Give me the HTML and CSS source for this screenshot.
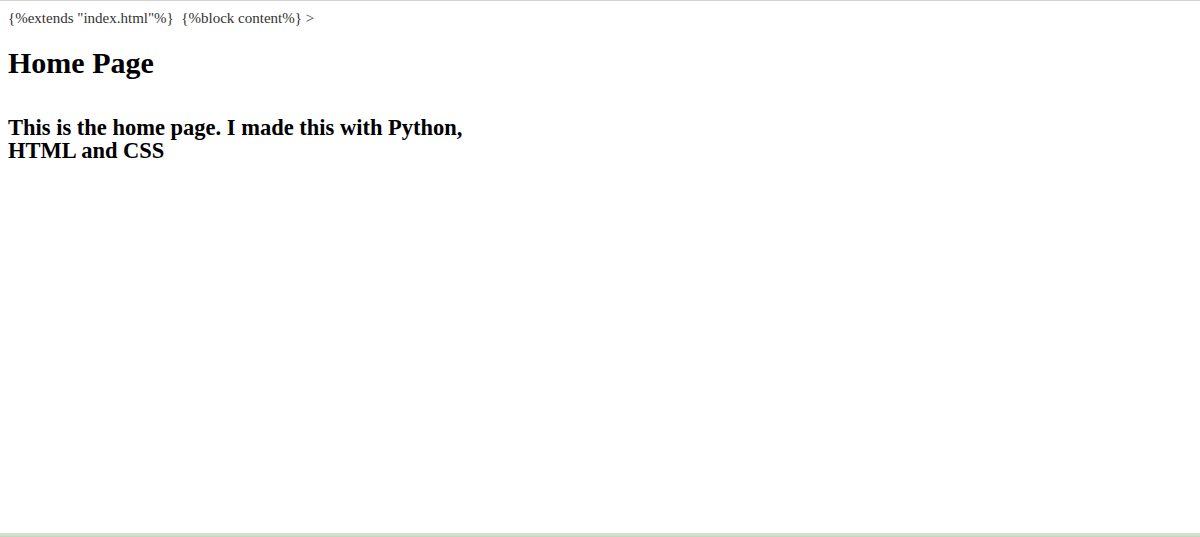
FILE: index.html
```html
<!DOCTYPE html>
<html lang="en">
<head>
    <meta charset="UTF-8">
    <meta name="viewport" content="width=device-width, initial-scale=1.0">
    <title>Home Page</title>
    <link rel="stylesheet" href="styles.css">
</head>
<body>
    <div class="page">
        <p class="template-line">{%extends "index.html"%}&nbsp; {%block content%} &gt;</p>
        <h1>Home Page</h1>
        <h2 class="intro">This is the home page. I made this with Python, HTML and CSS</h2>
    </div>
</body>
</html>
```

FILE: styles.css
```css
* {
    margin: 0;
    padding: 0;
    box-sizing: border-box;
}

html, body {
    height: 100%;
}

body {
    font-family: "Liberation Serif", "Times New Roman", serif;
    color: #000;
    background: #fff;
    border-top: 1px solid #d2d2d2;
}

.page {
    height: 100%;
    padding: 8px 8px 0;
    border-bottom: 1px solid #c8d4c4;
    box-shadow: inset 0 -3px 0 #cfe3c8;
}

.template-line {
    font-size: 15px;
    line-height: 18px;
    color: #333;
    margin-bottom: 19px;
}

h1 {
    font-size: 30px;
    margin-bottom: 36px;
}

.intro {
    font-size: 22.5px;
    line-height: 23px;
    max-width: 480px;
}
```
